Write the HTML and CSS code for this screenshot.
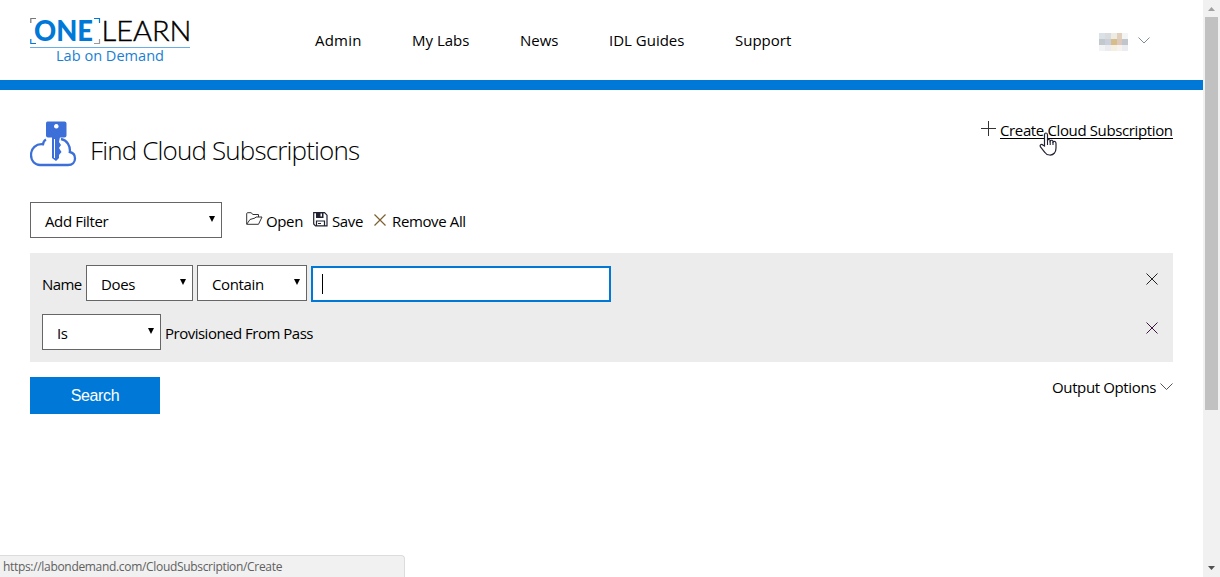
FILE: index.html
```html
<!DOCTYPE html>
<html lang="en">
<head>
<meta charset="utf-8">
<title>Find Cloud Subscriptions</title>
<link rel="stylesheet" href="styles.css">
</head>
<body>
<div class="window">
  <div class="page">
    <header class="header">
      <svg class="logo" width="162" height="50" viewBox="0 0 162 50">
        <path d="M.8 6V1.500H6" fill="none" stroke="#777" stroke-width="1.200"/>
        <path d="M64 1.500H69.500V6" fill="none" stroke="#0078d7" stroke-width="1.200"/>
        <path d="M.8 22V26.500H6" fill="none" stroke="#0078d7" stroke-width="1.200"/>
        <path d="M64 26.500H69.500V22" fill="none" stroke="#999" stroke-width="1.200"/>
        <text class="logo-one" x="4" y="23.500" textLength="59" lengthAdjust="spacingAndGlyphs">ONE</text>
        <text class="logo-learn" x="71.500" y="23.500" textLength="90" lengthAdjust="spacingAndGlyphs">LEARN</text>
        <path d="M0 30.500H160" stroke="#6aaee8"/>
        <text class="logo-sub" x="26" y="44" textLength="108" lengthAdjust="spacingAndGlyphs">Lab on Demand</text>
      </svg>
      <nav class="nav">
        <a class="w-admin">Admin</a><a class="w-labs">My Labs</a><a class="w-news">News</a><a class="w-guides">IDL Guides</a><a class="w-support">Support</a>
      </nav>
      <div class="user">
        <svg width="29" height="18" shape-rendering="crispEdges">
          <path fill="#dae1e7" d="M0 0h6v6H0z"/><path fill="#d9dbdc" d="M6 0h6v6H6z"/><path fill="#ecece5" d="M12 0h6v6h-6z"/><path fill="#e1cebb" d="M18 0h5v6h-5z"/><path fill="#f3f5f5" d="M23 0h6v6h-6z"/>
          <path fill="#c2c8cc" d="M0 6h6v6H0z"/><path fill="#c9d0dc" d="M6 6h6v6H6z"/><path fill="#d6bd8a" d="M12 6h6v6h-6z"/><path fill="#dcc9bb" d="M18 6h5v6h-5z"/><path fill="#c3c5cc" d="M23 6h6v6h-6z"/>
          <path fill="#f1f3f5" d="M0 12h6v6H0z"/><path fill="#ececf0" d="M6 12h6v6H6z"/><path fill="#f5efe1" d="M12 12h6v6h-6z"/><path fill="#f8f2ee" d="M18 12h5v6h-5z"/><path fill="#ebecef" d="M23 12h6v6h-6z"/>
        </svg>
        <svg width="12" height="8" viewBox="0 0 12 8"><path d="M.5 .5L6 6L11.500 .5" fill="none" stroke="#7c8d98"/></svg>
      </div>
    </header>
    <main class="main">
      <div class="title-row">
        <svg class="cloud" width="47" height="46" viewBox="0 0 47 46">
          <path d="M16 18.500C14 19.500 13.300 21 13 23.300C6 22.500 1 27.500 1 34C1 40 5 44 10 44H38C42.500 44 45 41 45 37.500C45 34 43 31.600 39.800 31C40.500 25 37 19 31 18" fill="none" stroke="#3c70d8" stroke-width="2.300"/>
          <path fill="#3c70d8" fill-rule="evenodd" d="M17.500.500H34.500Q36.500.500 36.500 2.500V14.500Q36.500 16.500 34.500 16.500H18Q16 16.500 16 14.500V2.500Q16 .500 17.500 .500ZM26.300 3A2.300 2.300 0 1 0 26.310 3Z"/>
          <path fill="#3c70d8" d="M22 16H30L29 21L31 24L29 27L31.500 31L29 34V37L26 40L22 37Z"/>
          <path d="M24.500 18V37" stroke="#fff" stroke-width="1"/>
        </svg>
        <h1 class="title">Find Cloud Subscriptions</h1>
        <a class="create">
          <svg width="15" height="15" viewBox="0 0 15 15"><path d="M0 7.500H15M7.500 0V15" stroke="#333"/></svg>
          <span class="create-label">Create Cloud Subscription</span>
          <svg class="cursor" width="20" height="24" viewBox="0 0 20 24"><path d="M5.500 14V3Q5.500 1 7 1Q8.500 1 8.500 3V8.500Q9 7.200 10 7.500Q11.200 7.700 11.200 9Q12 8 13 8.300Q14 8.600 14 10Q15 9 16 9.500Q17 10 17 11.500V16Q17 19 15.500 21Q13.500 23.300 10.500 23Q7.500 23 6 20.500L1.500 15Q.7 13.500 1.700 12.700Q3 12 4.200 13.300Z" fill="#fff" stroke="#223" stroke-width="1.200"/><path d="M8.500 8V13M11.200 9V13M14 10V13" stroke="#223" stroke-width="1.100"/></svg>
        </a>
      </div>
      <div class="toolbar">
        <div class="select s-filter"><span>Add Filter</span><i></i></div>
        <a class="tool open">
          <svg width="17" height="14" viewBox="0 0 17 14"><path d="M.7 12V1.700Q.7.700 1.700.700H5L7 2.500H12.500V5M.7 12.300L4 7.500L9 6L10 5H16L12.500 12.300Z" fill="none" stroke="#333" stroke-linejoin="round"/></svg>
          <span class="t-open">Open</span>
        </a>
        <a class="tool save">
          <svg width="15" height="15" viewBox="0 0 15 15"><path d="M.7.700H11.500L14 3.200V13.800H2.500L.7 12ZM3.500 13.500V9H11.500V13.500" fill="none" stroke="#212131" stroke-width="1.200"/><path d="M3 1H10.500V6H3Z" fill="#212131"/><path d="M7.500 1.500H9V4.500H7.500Z" fill="#fff"/><path d="M5 11.500H8" stroke="#212131"/></svg>
          <span class="t-save">Save</span>
        </a>
        <a class="tool remove">
          <svg width="12" height="12" viewBox="0 0 12 12"><path d="M.5.500L11.500 11.500M11.500.500L.5 11.500" stroke="#7d6032" stroke-width="1.200"/></svg>
          <span class="t-remove">Remove All</span>
        </a>
      </div>
      <section class="filters">
        <div class="filter">
          <span class="t-name">Name</span>
          <div class="select s-does"><span>Does</span><i></i></div>
          <div class="select s-contain"><span>Contain</span><i></i></div>
          <div class="input"><span class="caret"></span></div>
          <svg class="close" width="12" height="12" viewBox="0 0 12 12"><path d="M.5.500L11.500 11.500M11.500.500L.5 11.500" stroke="#222"/></svg>
        </div>
        <div class="filter">
          <div class="select s-is"><span>Is</span><i></i></div>
          <span class="t-pass">Provisioned From Pass</span>
          <svg class="close" width="12" height="12" viewBox="0 0 12 12"><path d="M.5.500L11.500 11.500M11.500.500L.5 11.500" stroke="#40163f"/></svg>
        </div>
      </section>
      <div class="actions">
        <button class="search">Search</button>
        <a class="output"><span>Output Options</span><svg width="13" height="8" viewBox="0 0 13 8"><path d="M.5 .5L6.500 6.500L12.500 .5" fill="none" stroke="#555"/></svg></a>
      </div>
    </main>
  </div>
  <div class="scrollbar">
    <svg width="17" height="17"><path d="M5 11H12L8.500 7Z" fill="#a0a0a0"/></svg>
    <div class="thumb"></div>
    <svg class="down" width="17" height="17"><path d="M5 6H12L8.500 10Z" fill="#505050"/></svg>
  </div>
  <div class="status">https://labondemand.com/CloudSubscription/Create</div>
</div>
</body>
</html>
```
FILE: styles.css
```css
* { box-sizing: border-box; }
body { margin: 0; background: #fff; color: #000; font: 15px/20px "Open Sans", "Noto Sans", sans-serif; letter-spacing: -0.37px; }
svg { display: block; flex: none; }
a, span { white-space: nowrap; }
.window { display: flex; height: 577px; position: relative; overflow: hidden; }
.page { width: 1203px; }
.header { display: flex; height: 90px; border-bottom: 10px solid #0078d7; padding-left: 30px; }
.logo { margin-top: 17px; overflow: visible; }
.logo-one { font: 900 28px Lato, sans-serif; fill: #0078d7; letter-spacing: 0; }
.logo-learn { font: 300 28px Lato, sans-serif; fill: #000; stroke: #000; stroke-width: 0.4px; letter-spacing: 0; }
.logo-sub { font: 15px "Open Sans", sans-serif; fill: #1a7fd4; letter-spacing: 0; }
.nav { display: flex; gap: 50px; margin: 30px 0 0 123px; letter-spacing: 0; }
.w-admin { width: 47px; letter-spacing: 0.2px; }
.w-labs { width: 58px; }
.w-news { width: 39px; }
.w-guides { width: 76px; }
.w-support { width: 57px; }
.user { display: flex; gap: 10px; margin: 33px 53px 0 auto; }
.user svg + svg { margin-top: 4px; }
.main { padding: 31px 30px 0; }
.title-row { display: flex; height: 81px; }
.title { margin: 11px 0 0 13px; font-size: 26px; line-height: 36px; font-weight: 300; letter-spacing: -0.85px; }
.create { position: relative; display: flex; gap: 4px; margin-left: auto; }
.create-label { height: 18px; margin-top: -1px; padding-top: 0; border-bottom: 1px solid #000; width: 173px; height: 19px; }
.cursor { position: absolute; left: 58px; top: 11px; }
.toolbar { display: flex; height: 36px; }
.select { display: flex; align-items: center; justify-content: space-between; height: 36px; padding: 1px 6px 0 14px; border: 1px solid #666; background: #fff; }
.select i { border: solid transparent; border-width: 6px 3.5px 0; border-top-color: #000; margin-top: -3px; }
.s-filter { width: 192px; }
.tool { display: flex; padding-top: 10px; }
.tool span { margin-top: -1px; }
.open { margin-left: 24px; gap: 3px; width: 67px; }
.save { gap: 4px; width: 61px; }
.remove { gap: 6px; }
.remove svg { margin-top: 2px; }
.filters { height: 109px; margin-top: 15px; padding: 12px 15px 0 12px; background: #ececec; }
.filter { display: flex; height: 49px; }
.filter > span { padding-top: 9px; }
.t-name { width: 44px; letter-spacing: -0.6px; }
.t-pass { letter-spacing: -0.5px; }
.s-does { width: 107px; }
.s-contain { width: 110px; margin: 0 4px; }
.input { width: 300px; height: 36px; margin-top: 1px; border: 2px solid #0078d7; background: #fff; padding: 6px 0 0 9px; }
.caret { display: block; width: 1px; height: 20px; background: #000; }
.close { margin: 8px 0 0 auto; }
.s-is { width: 119px; margin-right: 4px; }
.actions { display: flex; justify-content: space-between; margin-top: 15px; }
.search { width: 130px; height: 37px; border: 0; padding: 0; background: #0078d7; color: #fff; font: 16px "Liberation Sans", sans-serif; letter-spacing: -0.35px; }
.output { display: flex; }
.output span { width: 108px; }
.output svg { margin-top: 6px; }
.scrollbar { display: flex; flex-direction: column; width: 17px; height: 577px; background: #f1f1f1; }
.thumb { width: 13px; height: 393px; margin-left: 2px; background: #c1c1c1; }
.down { margin-top: auto; }
.status { position: absolute; left: 0; bottom: 0; width: 405px; height: 22px; padding-left: 3px; border: 1px solid #dcdcdc; border-left: 0; border-bottom: 0; border-top-right-radius: 4px; background: #f1f1f1; color: #606060; font-size: 12px; line-height: 22px; letter-spacing: -0.32px; }
```
